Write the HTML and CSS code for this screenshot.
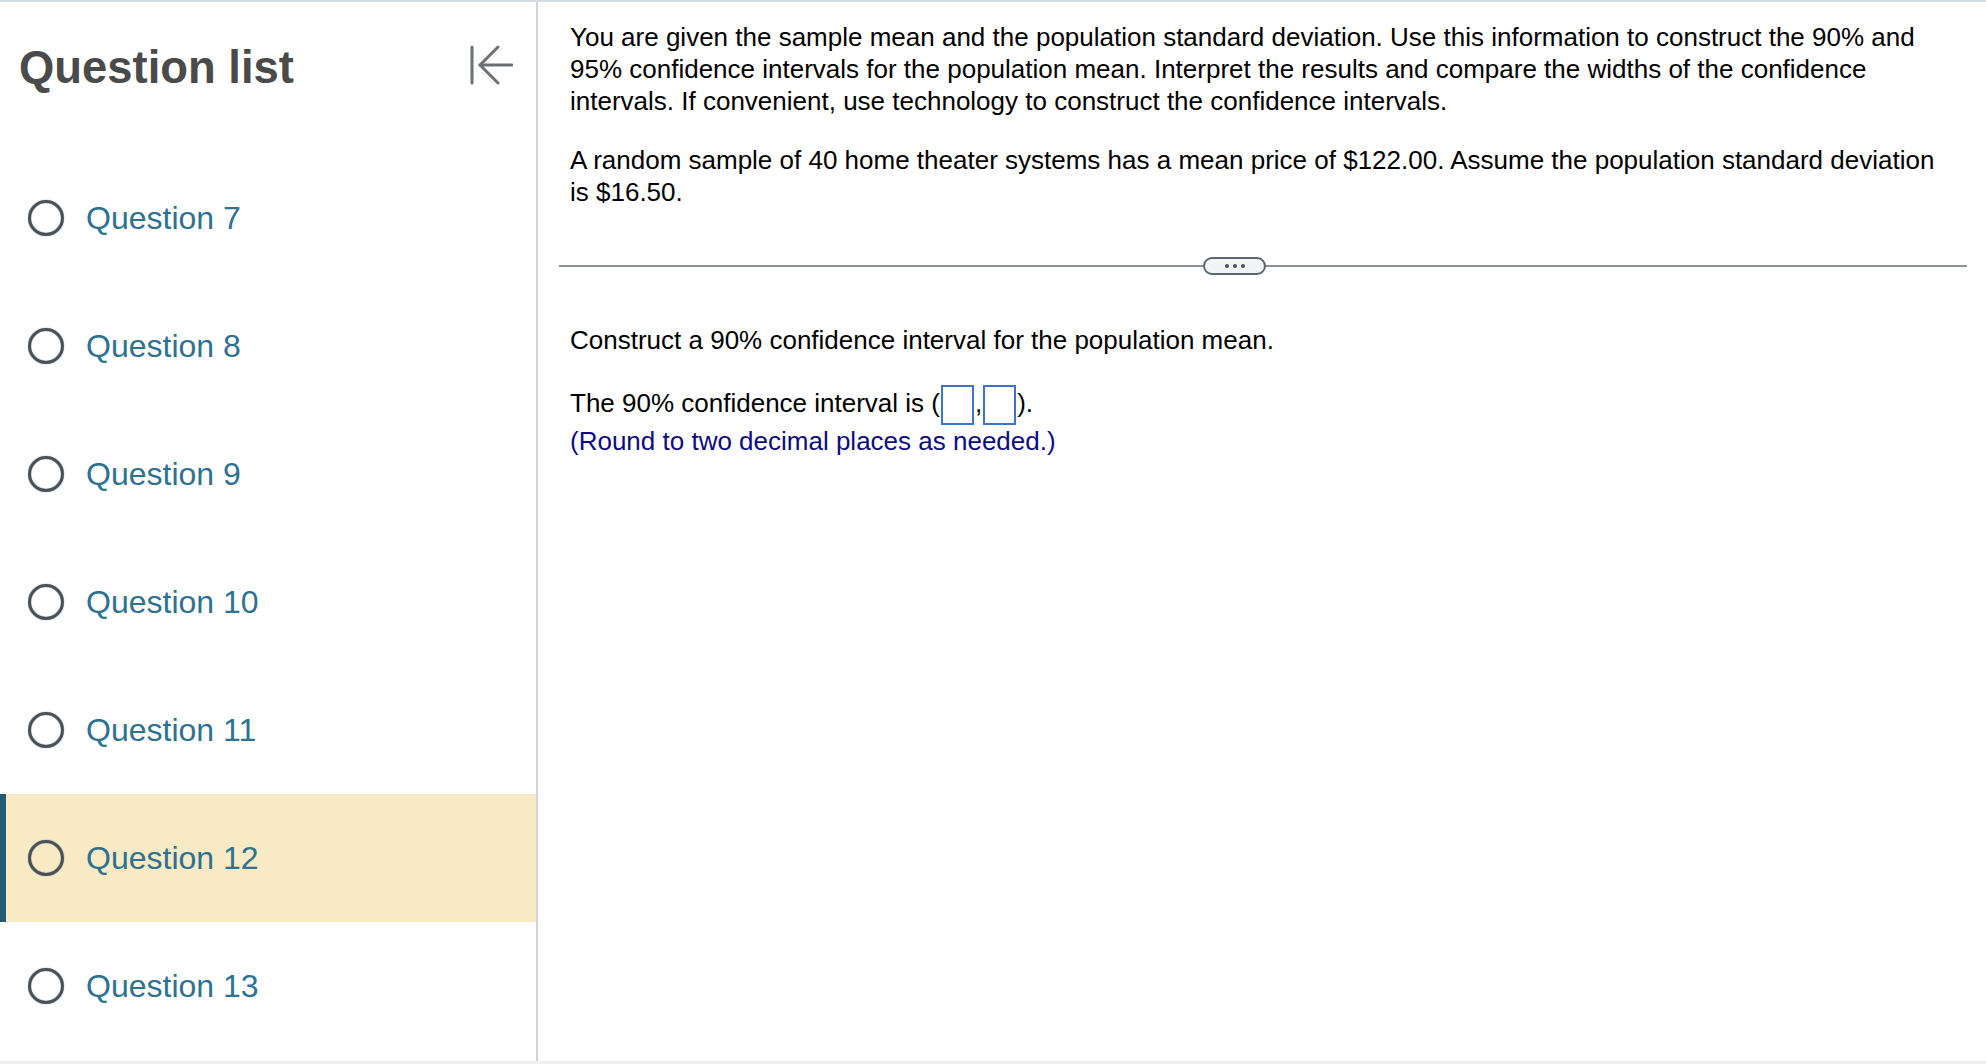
FILE: index.html
```html
<!DOCTYPE html>
<html lang="en">
<head>
<meta charset="utf-8">
<title>Question 12</title>
<link rel="stylesheet" href="styles.css">
</head>
<body>
<div class="topline"></div>
<div class="app">
  <aside class="sidebar">
    <div class="side-head">
      <h1 class="side-title">Question list</h1>
      <button class="collapse" aria-label="Collapse question list">
        <svg width="43" height="40" viewBox="0 0 43 40" fill="none" stroke="#6b7073" stroke-width="3" stroke-linecap="round" stroke-linejoin="round">
          <line x1="2" y1="2" x2="2" y2="38"/>
          <line x1="10" y1="20" x2="42" y2="20"/>
          <polyline points="28,2 10,20 28,38"/>
        </svg>
      </button>
    </div>
    <ul class="qlist">
      <li class="qitem"><span class="radio"></span><span class="qlabel">Question 7</span></li>
      <li class="qitem"><span class="radio"></span><span class="qlabel">Question 8</span></li>
      <li class="qitem"><span class="radio"></span><span class="qlabel">Question 9</span></li>
      <li class="qitem"><span class="radio"></span><span class="qlabel">Question 10</span></li>
      <li class="qitem"><span class="radio"></span><span class="qlabel">Question 11</span></li>
      <li class="qitem active"><span class="radio"></span><span class="qlabel">Question 12</span></li>
      <li class="qitem"><span class="radio"></span><span class="qlabel">Question 13</span></li>
    </ul>
  </aside>
  <main class="main">
    <div class="stem">
      <p class="para">You are given the sample mean and the population standard deviation. Use this information to construct the 90% and 95% confidence intervals for the population mean. Interpret the results and compare the widths of the confidence intervals. If convenient, use technology to construct the confidence intervals.</p>
      <p class="para">A random sample of 40 home theater systems has a mean price of $122.00. Assume the population standard deviation is $16.50.</p>
    </div>
    <div class="divider">
      <span class="rule rule-left"></span>
      <button class="more" aria-label="Show more"><span class="dot"></span><span class="dot"></span><span class="dot"></span></button>
      <span class="rule rule-right"></span>
    </div>
    <div class="answer">
      <p class="para prompt">Construct a 90% confidence interval for the population mean.</p>
      <p class="para ci">The 90% confidence interval is (<span class="box"></span>,<span class="box"></span>).</p>
      <p class="para note">(Round to two decimal places as needed.)</p>
    </div>
  </main>
</div>
<div class="bottomline"></div>
</body>
</html>
```

FILE: styles.css
```css
* { box-sizing: border-box; }
html, body { margin: 0; padding: 0; }
body {
  font-family: "Liberation Sans", Arial, sans-serif;
  background: #ffffff;
  color: #000;
  width: 1986px;
  height: 1064px;
  overflow: hidden;
}
.topline { height: 2px; background: #d6dae1; }
.app {
  display: flex;
  height: 1059px;
}
.sidebar {
  width: 538px;
  flex: 0 0 538px;
  border-right: 2px solid #d2d3df;
  display: flex;
  flex-direction: column;
}
.side-head {
  height: 152px;
  display: flex;
  justify-content: space-between;
  align-items: flex-start;
  padding: 39px 23px 0 19px;
}
.side-title {
  margin: 0;
  font-size: 45.4px;
  line-height: 53px;
  font-weight: 700;
  color: #4a4a4a;
}
.collapse {
  border: 0;
  background: transparent;
  padding: 0;
  margin-top: 4px;
  width: 43px;
  height: 40px;
  display: block;
}
.collapse svg { display: block; }
.qlist { list-style: none; margin: 0; padding: 0; }
.qitem {
  height: 128px;
  display: flex;
  align-items: center;
  padding-left: 28px;
  gap: 22px;
}
.qitem.active {
  background: #f7eac4;
  box-shadow: inset 6px 0 0 #235b74;
}
.radio {
  width: 36px;
  height: 36px;
  border-radius: 50%;
  border: 3.5px solid #48515a;
  box-shadow: 0 0 1px #48515a, inset 0 0 1px #48515a;
  flex: 0 0 36px;
}
.qlabel {
  font-size: 32px;
  color: #2e7191;
  line-height: 36px;
}
.main {
  flex: 1;
  padding: 19px 19px 0 21px;
}
.stem { padding-left: 11px; width: 1391px; }
.para {
  margin: 0;
  font-size: 26px;
  line-height: 32px;
}
.stem .para + .para { margin-top: 27px; }
.divider {
  display: flex;
  align-items: center;
  margin-top: 49px;
  height: 18px;
}
.rule { height: 2px; background: #8b9099; }
.rule-left { width: 644px; flex: 0 0 644px; }
.rule-right { flex: 1; }
.more {
  width: 63px;
  height: 18px;
  border: 2px solid #5b6670;
  border-radius: 9px;
  background: #f3f4f6;
  display: flex;
  align-items: center;
  justify-content: center;
  gap: 4px;
  padding: 0;
}
.dot { width: 4px; height: 4px; border-radius: 50%; background: #4a5058; }
.answer { padding-left: 11px; margin-top: 49px; }
.prompt { margin-bottom: 26px; }
.ci { line-height: 43px; }
.box {
  display: inline-block;
  width: 33px;
  height: 40px;
  border: 2px solid #3f72c9;
  vertical-align: middle;
  margin: 0 1px;
}
.note { color: #0c0c80; }
.bottomline { height: 3px; background: #efefef; }
```
